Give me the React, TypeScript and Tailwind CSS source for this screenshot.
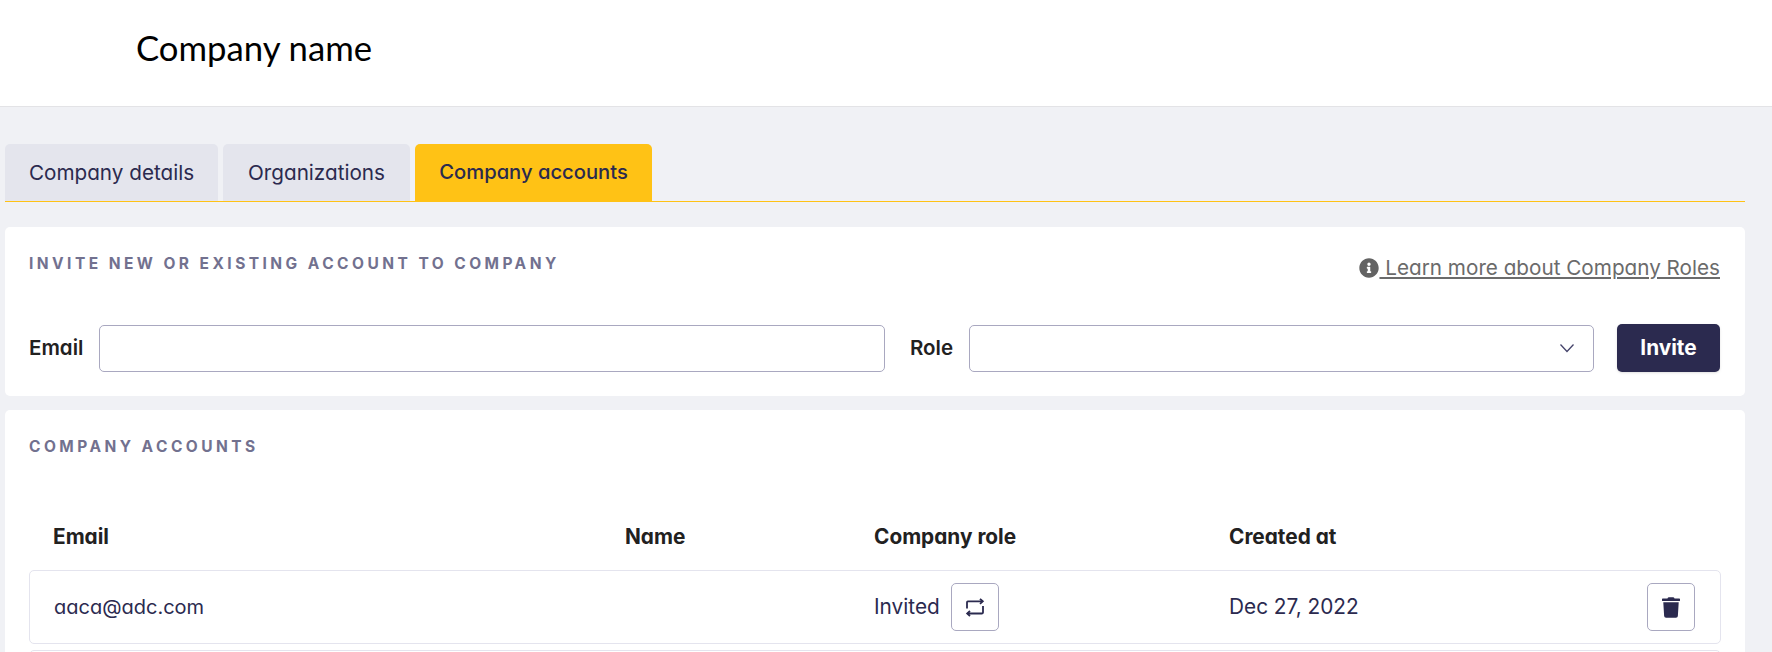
import { FaInfoCircle, FaTrash } from "react-icons/fa";

const body = "font-['Inter','Lato',sans-serif] [font-feature-settings:'cv11']";

function Tab({ label, active, w }: { label: string; active?: boolean; w: string }) {
  return (
    <div
      className={`${w} h-[57px] flex items-center justify-center rounded-t-[5px] text-[#2b2a4f] ${
        active ? "bg-[#ffc215] font-medium text-[20.2px]" : "bg-[#e4e5ed] text-[20.7px]"
      }`}
    >
      {label}
    </div>
  );
}

function Heading({ children }: { children: string }) {
  return <h2 className="text-[15.5px] font-bold tracking-[3.45px] uppercase text-[#72718f] leading-5">{children}</h2>;
}

function RepeatIcon() {
  return (
    <svg width="20" height="20" viewBox="0 0 20 20" fill="none" stroke="#2b2a4f" strokeWidth="1.8">
      <path d="M2 11.500V5.200A0.900 0.900 0 0 1 2.900 4.300H17.500" />
      <path d="M15 1.800l2.800 2.500-2.800 2.500" />
      <path d="M18 9v6.600a0.900 0.900 0 0 1-0.900 0.900H2.500" />
      <path d="M5 14l-2.800 2.500L5 19" />
    </svg>
  );
}

export default function App() {
  return (
    <div className={`${body} w-[1772px] h-[652px] overflow-hidden bg-[#f0f1f5] text-[#22211f]`}>
      <header className="h-[107px] bg-white border-b border-[#e3e3e6] flex items-center pl-[136px] pb-[10px]">
        <span className="font-['Lato',sans-serif] text-[34.7px] text-black">Company name</span>
      </header>

      <main className="w-[1740px] ml-[5px]">
        <nav className="mt-[37px] flex gap-[5px] border-b border-[#ffc215]">
          <Tab label="Company details" w="w-[213px]" />
          <Tab label="Organizations" w="w-[187px]" />
          <Tab label="Company accounts" active w="w-[237px]" />
        </nav>

        <section className="mt-[25px] h-[169px] bg-white rounded-[5px] px-6 pt-[27px]">
          <div className="flex justify-between items-start">
            <Heading>Invite new or existing account to company</Heading>
            <a className="flex items-center mt-[2px] pr-px text-[20.7px] text-[#6b6b6b] leading-6">
              <FaInfoCircle className="w-[20px] h-[20px] text-[#636363]" />
              <span className="underline whitespace-pre"> Learn more about Company Roles</span>
            </a>
          </div>
          <div className="flex items-center mt-[44px] h-[48px]">
            <label className="text-[20.5px] font-semibold w-[70px]">Email</label>
            <div className="w-[786px] h-[47px] rounded-[5px] border border-[#a9a8c0] bg-white" />
            <label className="ml-[25px] text-[20.5px] font-semibold w-[59px]">Role</label>
            <div className="w-[625px] h-[47px] rounded-[5px] border border-[#a9a8c0] bg-white flex items-center justify-end pr-[18px]">
              <svg width="16" height="10" viewBox="0 0 16 10" fill="none" stroke="#44436a" strokeWidth="1.3">
                <path d="M1.500 1.500 8 8.500l6.500-7" />
              </svg>
            </div>
            <button className="ml-[23px] w-[103px] h-[48px] rounded-[5px] bg-[#2b2a4f] text-white text-[20.8px] font-bold shadow-sm">
              Invite
            </button>
          </div>
        </section>

        <section className="mt-[14px] h-[300px] bg-white rounded-[5px] px-6 pt-[27px]">
          <Heading>Company accounts</Heading>
          <div className="grid grid-cols-[572px_249px_355px_1fr] pl-6 mt-[64px] h-[28px] items-center text-[20.8px] font-bold">
            <div>Email</div>
            <div>Name</div>
            <div>Company role</div>
            <div>Created at</div>
          </div>
          <div className="grid grid-cols-[571px_249px_355px_1fr] pl-6 mt-[21px] h-[74px] items-center rounded-[5px] border border-[#e4e4ee] text-[20.8px] text-[#2b2a4f]">
            <div className="text-[20px]">aaca@adc.com</div>
            <div />
            <div className="flex items-center gap-[11px]">
              <span>Invited</span>
              <button className="w-[48px] h-[48px] rounded-[5px] border border-[#a9a8c0] flex items-center justify-center">
                <RepeatIcon />
              </button>
            </div>
            <div className="flex items-center justify-between pr-[25px]">
              <span>Dec 27, 2022</span>
              <button className="w-[48px] h-[48px] rounded-[5px] border border-[#a9a8c0] flex items-center justify-center">
                <FaTrash className="w-[18px] h-[21px] text-[#2b2a4f]" />
              </button>
            </div>
          </div>
          <div className="mt-[6px] h-[74px] rounded-[5px] border border-[#e4e4ee]" />
        </section>
      </main>
    </div>
  );
}
